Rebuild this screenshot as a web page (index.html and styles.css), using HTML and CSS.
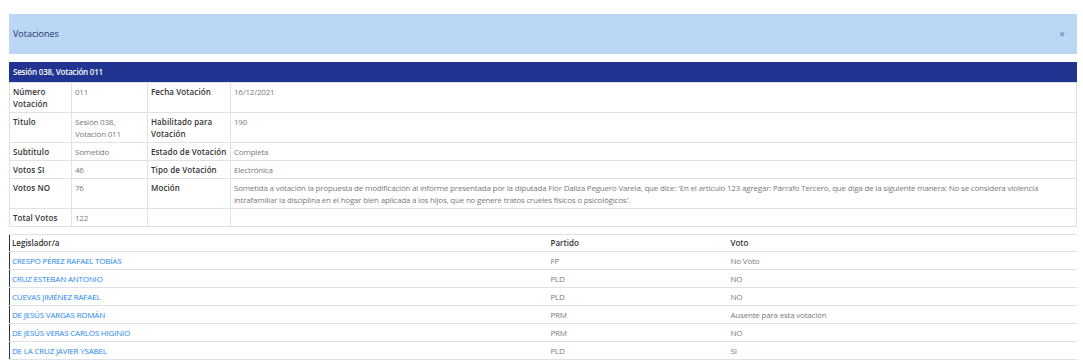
FILE: index.html
```html
<!DOCTYPE html>
<html>
<head>
<meta charset="utf-8">
<title>Votaciones</title>
<link rel="stylesheet" href="styles.css">
</head>
<body>

<div class="modal-header">
    <span class="modal-title">Votaciones</span>
    <span class="close">&times;</span>
</div>

<div class="panel-title">Sesión 038, Votación 011</div>

<table class="info">
    <colgroup>
        <col class="c1"><col class="c2"><col class="c3"><col>
    </colgroup>
    <tr>
        <th>Número Votación</th><td>011</td>
        <th>Fecha Votación</th><td>16/12/2021</td>
    </tr>
    <tr>
        <th>Titulo</th><td>Sesión 038, Votación 011</td>
        <th>Habilitado para Votación</th><td>190</td>
    </tr>
    <tr>
        <th>Subtitulo</th><td>Sometido</td>
        <th>Estado de Votación</th><td>Completa</td>
    </tr>
    <tr>
        <th>Votos SI</th><td>46</td>
        <th>Tipo de Votación</th><td>Electrónica</td>
    </tr>
    <tr>
        <th>Votos NO</th><td>76</td>
        <th>Moción</th><td>Sometida a votación la propuesta de modificación al informe presentada por la diputada Fior Daliza Peguero Varela, que dice: 'En el articulo 123 agregar: Párrafo Tercero, que diga de la siguiente manera: No se considera violencia intrafamiliar la disciplina en el hogar bien aplicada a los hijos, que no genere tratos crueles fisicos o psicológicos'.</td>
    </tr>
    <tr>
        <th>Total Votos</th><td>122</td>
        <th></th><td></td>
    </tr>
</table>

<table class="votos">
    <colgroup>
        <col class="v1"><col class="v2"><col>
    </colgroup>
    <thead>
        <tr><th>Legislador/a</th><th>Partido</th><th>Voto</th></tr>
    </thead>
    <tbody>
        <tr><td><a href="#">CRESPO PÉREZ RAFAEL TOBÍAS</a></td><td>FP</td><td>No Voto</td></tr>
        <tr><td><a href="#">CRUZ ESTEBAN ANTONIO</a></td><td>PLD</td><td>NO</td></tr>
        <tr><td><a href="#">CUEVAS JIMÉNEZ RAFAEL</a></td><td>PLD</td><td>NO</td></tr>
        <tr><td><a href="#">DE JESÚS VARGAS ROMÁN</a></td><td>PRM</td><td>Ausente para esta votación</td></tr>
        <tr><td><a href="#">DE JESÚS VERAS CARLOS HIGINIO</a></td><td>PRM</td><td>NO</td></tr>
        <tr><td><a href="#">DE LA CRUZ JAVIER YSABEL</a></td><td>PLD</td><td>SI</td></tr>
    </tbody>
</table>

</body>
</html>
```

FILE: styles.css
```css
body {
    margin: 14px 6px 0 9px;
    font-family: "Open Sans", "Noto Sans", sans-serif;
    font-size: 8px;
    line-height: 12px;
    color: #444;
    background: #fff;
}

/* cabecera del modal */
.modal-header {
    display: flex;
    align-items: center;
    justify-content: space-between;
    height: 40px;
    padding: 0 12px 0 4px;
    background: #bcd7f5;
}

.modal-title {
    font-size: 9px;
    color: #25336b;
}

.close {
    font-size: 10px;
    color: #6a7bb8;
}

.panel-title {
    margin-top: 8px;
    height: 20px;
    line-height: 20px;
    padding: 0 4px;
    background: #213491;
    color: #fff;
    font-weight: 600;
    letter-spacing: -0.2px;
}

table {
    width: 100%;
    border-collapse: collapse;
    table-layout: fixed;
}

/* tabla de datos */
.info .c1 { width: 62px; }
.info .c2 { width: 76px; }
.info .c3 { width: 83px; }

.info th,
.info td {
    border: 1px solid #dee2e6;
    padding: 3px 3px 2px;
    text-align: left;
    vertical-align: top;
}

.info th {
    font-weight: 600;
    color: #333;
    letter-spacing: 0.1px;
}

.info td {
    color: #7a7a7a;
    letter-spacing: -0.2px;
}

/* tabla de legisladores */
.votos {
    margin-top: 7px;
    border-left: 1px solid #333;
}

.votos .v1 { width: 539px; }
.votos .v2 { width: 180px; }

.votos th,
.votos td {
    border-top: 1px solid #dee2e6;
    border-bottom: 1px solid #dee2e6;
    padding: 3px 2px 2px;
    text-align: left;
    height: 12px;
}

.votos th {
    padding: 2px 2px 2px;
    font-weight: 600;
    color: #333;
}

.votos td {
    color: #7a7a7a;
    letter-spacing: -0.2px;
}

.votos a {
    color: #1e88f0;
    text-decoration: none;
}
```
